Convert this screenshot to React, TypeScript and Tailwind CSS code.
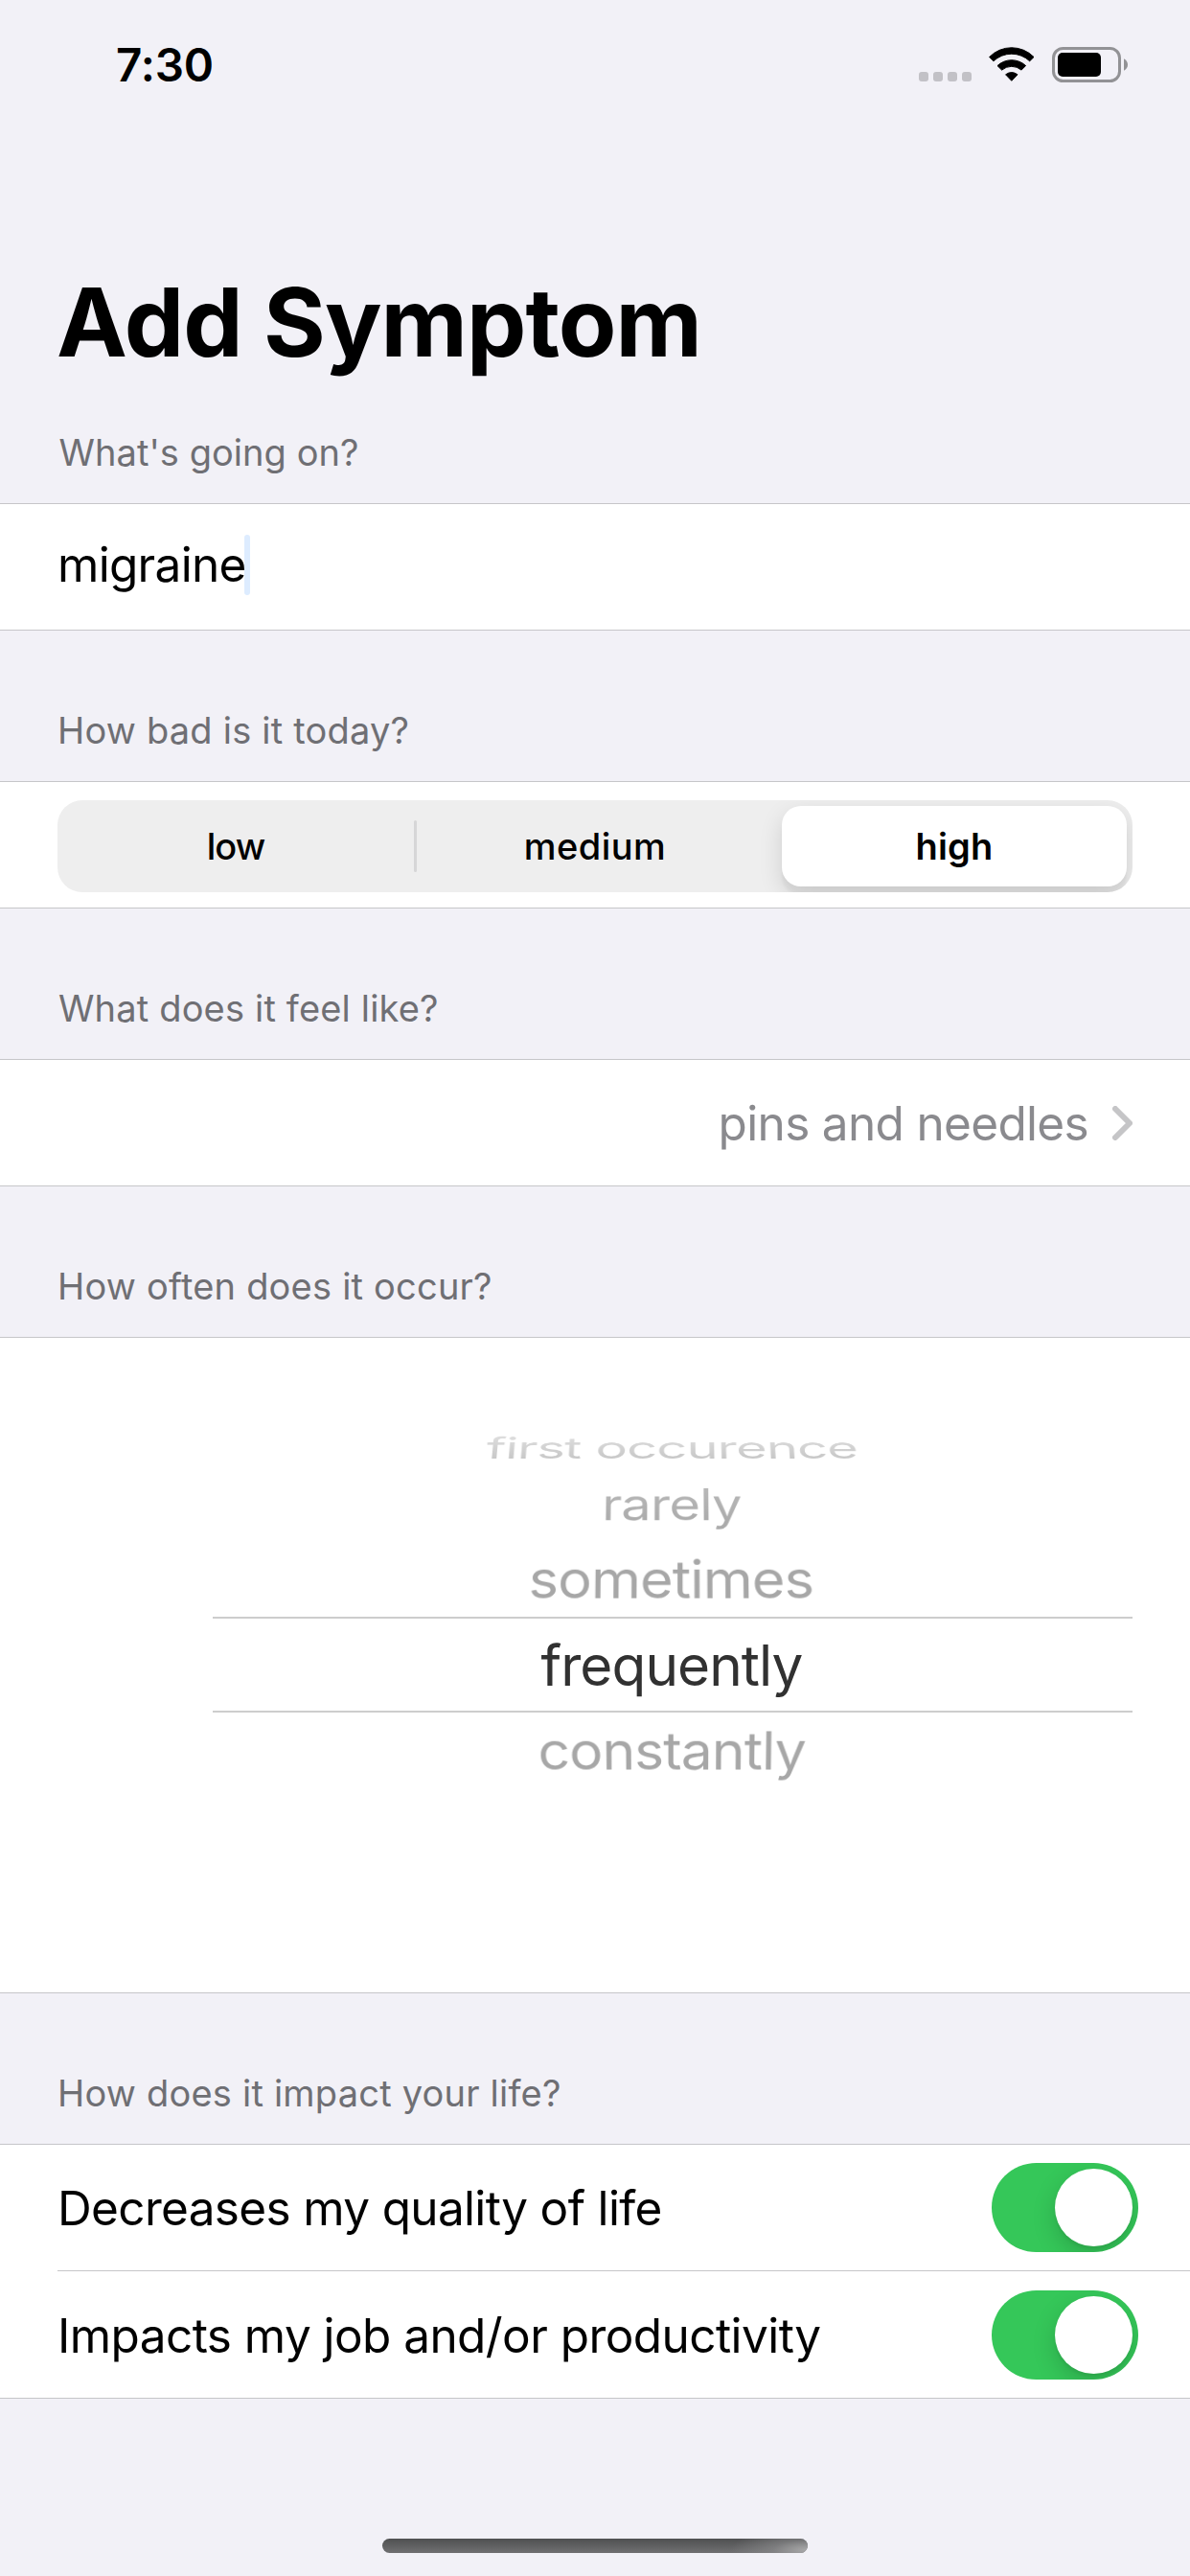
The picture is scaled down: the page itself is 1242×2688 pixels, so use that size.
import type { ReactNode } from "react";

function StatusBar() {
  return (
    <div className="flex h-[132px] items-start justify-between pl-[121px] pr-[65px]">
      <span className="mt-[38px] text-[47.5px] leading-[60px] font-semibold tracking-[-0.14px]">7:30</span>
      <div className="mt-[49px] flex items-start">
        <div className="mt-[26px] mr-[18px] flex gap-[5px]">
          <i className="size-[10px] rounded-[3px] bg-[#c2c1c6]" />
          <i className="size-[10px] rounded-[3px] bg-[#c2c1c6]" />
          <i className="size-[10px] rounded-[3px] bg-[#c2c1c6]" />
          <i className="size-[10px] rounded-[3px] bg-[#c2c1c6]" />
        </div>
        <svg width="48" height="37" viewBox="0 0 48 37" fill="black" stroke="black" strokeWidth="1" strokeLinejoin="round">
          <path d="M.6 10.5A32.5 32.5 0 0 1 47 10.5L42.7 14.8A27.3 27.3 0 0 0 4.9 14.8Z" />
          <path d="M9 19.6A21.6 21.6 0 0 1 38.6 19.6L34 24.1A15.6 15.6 0 0 0 13.6 24.1Z" />
          <path d="M17.6 28.8A10.6 10.6 0 0 1 30 28.8L23.8 35.3Z" />
        </svg>
        <svg className="ml-[18px]" width="79" height="37" viewBox="0 0 79 37">
          <rect x="1.5" y="1.5" width="69" height="34" rx="10" fill="none" stroke="#929295" strokeWidth="3" />
          <rect x="6" y="6" width="45" height="25" rx="5" fill="black" />
          <path d="M75 12.2Q79 14.5 79 18.5T75 24.8Z" fill="#929295" />
        </svg>
      </div>
    </div>
  );
}

function Label({ children, className = "h-[157px] pl-[60px] tracking-[0.21px]" }: { children: ReactNode; className?: string }) {
  return (
    <div className={`flex items-end pb-[29px] text-[38px] leading-[48px] text-[#6f6f74] ${className}`}>
      {children}
    </div>
  );
}

function Card({ children, className = "h-[133px]" }: { children: ReactNode; className?: string }) {
  return <section className={`border-y border-[#c6c6c9] bg-white ${className}`}>{children}</section>;
}

function Toggle() {
  return (
    <div className="flex h-[93px] w-[153px] items-center justify-end overflow-hidden rounded-full bg-[#35c759] pr-[6px]">
      <div className="size-[81px] rounded-full bg-white shadow-[0_9px_24px_rgba(0,0,0,0.17),0_3px_3px_rgba(0,0,0,0.05)]" />
    </div>
  );
}

export default function App() {
  return (
    <main className="flex h-[2688px] w-[1242px] flex-col bg-[#f2f1f7] font-['Inter',sans-serif] text-black">
      <StatusBar />
      <h1 className="mt-36 pl-[59px] text-[99px] leading-[120px] font-bold tracking-[-0.95px]">Add Symptom</h1>

      <Label className="h-[129px] pl-[61.5px] tracking-[0.05px]">What's going on?</Label>
      <Card className="flex h-[133px] items-center pb-[5px] pl-[60px]">
        <span className="text-[49.5px] leading-[60px] tracking-[-0.7px]">migraine</span>
        <span className="-ml-[2px] h-[63px] w-[6px] rounded-full bg-[#ddecff]" />
      </Card>

      <Label>How bad is it today?</Label>
      <Card className="h-[133px] px-[60px] pt-[19px]">
        <div className="grid h-24 grid-cols-3 overflow-hidden rounded-[26px] bg-[#eeeeee] text-[38px] font-[450]">
          <div className="flex items-center">
            <span className="flex-1 text-center tracking-[-0.9px]">low</span>
            <span className="-mr-px h-[54px] w-[3px] rounded-full bg-[#d6d6d7]" />
          </div>
          <div className="flex items-center justify-center tracking-[0.45px]">medium</div>
          <div className="my-[6px] mr-[6px] ml-[8px] flex items-center justify-center rounded-[20px] bg-white font-[570] tracking-[0.2px] shadow-[0_9px_24px_rgba(0,0,0,0.13),0_9px_3px_rgba(0,0,0,0.04)]">
            high
          </div>
        </div>
      </Card>

      <Label className="h-[157px] pl-[61px] tracking-[0.17px]">What does it feel like?</Label>
      <Card className="flex h-[133px] items-center justify-end pr-[60px] text-[#8a8a8e]">
        <span className="text-[49.5px] leading-[60px] tracking-[-0.67px]">pins and needles</span>
        <svg className="ml-[25px]" width="21" height="36" viewBox="0 0 21 36" fill="none">
          <path d="M3 3L18 18L3 33" stroke="#c5c5c7" strokeWidth="6" strokeLinecap="round" strokeLinejoin="round" />
        </svg>
      </Card>

      <Label>How often does it occur?</Label>
      <Card className="h-[685px] pt-[91px] pr-[60px] pl-[222px]">
        <div className="flex flex-col text-center text-[58.5px] leading-[80px] tracking-[-0.9px] text-[#a7a7a7]">
          <div className="flex h-12 items-center justify-center pr-[2px]">
            <span className="bg-linear-to-b from-[#dedede] from-20% to-[#c6c6c6] to-80% bg-clip-text text-transparent [transform:perspective(3000px)_rotateX(57deg)_scale(0.957)]">
              first occurence
            </span>
          </div>
          <div className="flex h-[69px] items-center justify-center pr-[2px]">
            <span className="bg-linear-to-b from-[#b8b8b8] from-20% to-[#ababab] to-80% bg-clip-text text-transparent [transform:perspective(3000px)_rotateX(36deg)_scale(0.957)]">
              rarely
            </span>
          </div>
          <div className="flex h-[83px] items-center justify-center pt-[5px] pr-[3px]">
            <span className="[transform:perspective(3000px)_rotateX(23deg)_scale(1.015)]">sometimes</span>
          </div>
          <div className="flex h-[100px] items-center justify-center border-y-2 border-[#cdcdcd] pt-px pr-[2px] tracking-[-0.95px] text-[#313131]">
            frequently
          </div>
          <div className="flex h-20 items-center justify-center pr-[2px]">
            <span className="[transform:perspective(3000px)_rotateX(-22deg)_scale(1.004)]">constantly</span>
          </div>
        </div>
      </Card>

      <Label>How does it impact your life?</Label>
      <Card className="h-[266px] pl-[60px] text-[49.5px] leading-[60px]">
        <div className="flex h-[132px] items-center justify-between border-b border-[#c6c6c9] pr-[54px] tracking-[-0.66px]">
          Decreases my quality of life
          <Toggle />
        </div>
        <div className="flex h-[132px] items-center justify-between pt-px pr-[54px] tracking-[-0.56px]">
          Impacts my job and/or productivity
          <Toggle />
        </div>
      </Card>

      <div className="mt-[146px] h-[15px] w-[444px] self-center overflow-hidden rounded-full bg-linear-to-b from-[#4f5051] to-[#707072]">
        <div className="ml-auto h-full w-[90px] bg-[radial-gradient(80px_24px_at_100%_80%,#a9a9aa_0%,rgba(150,150,152,0.5)_45%,rgba(112,112,114,0)_100%)]" />
      </div>
    </main>
  );
}
